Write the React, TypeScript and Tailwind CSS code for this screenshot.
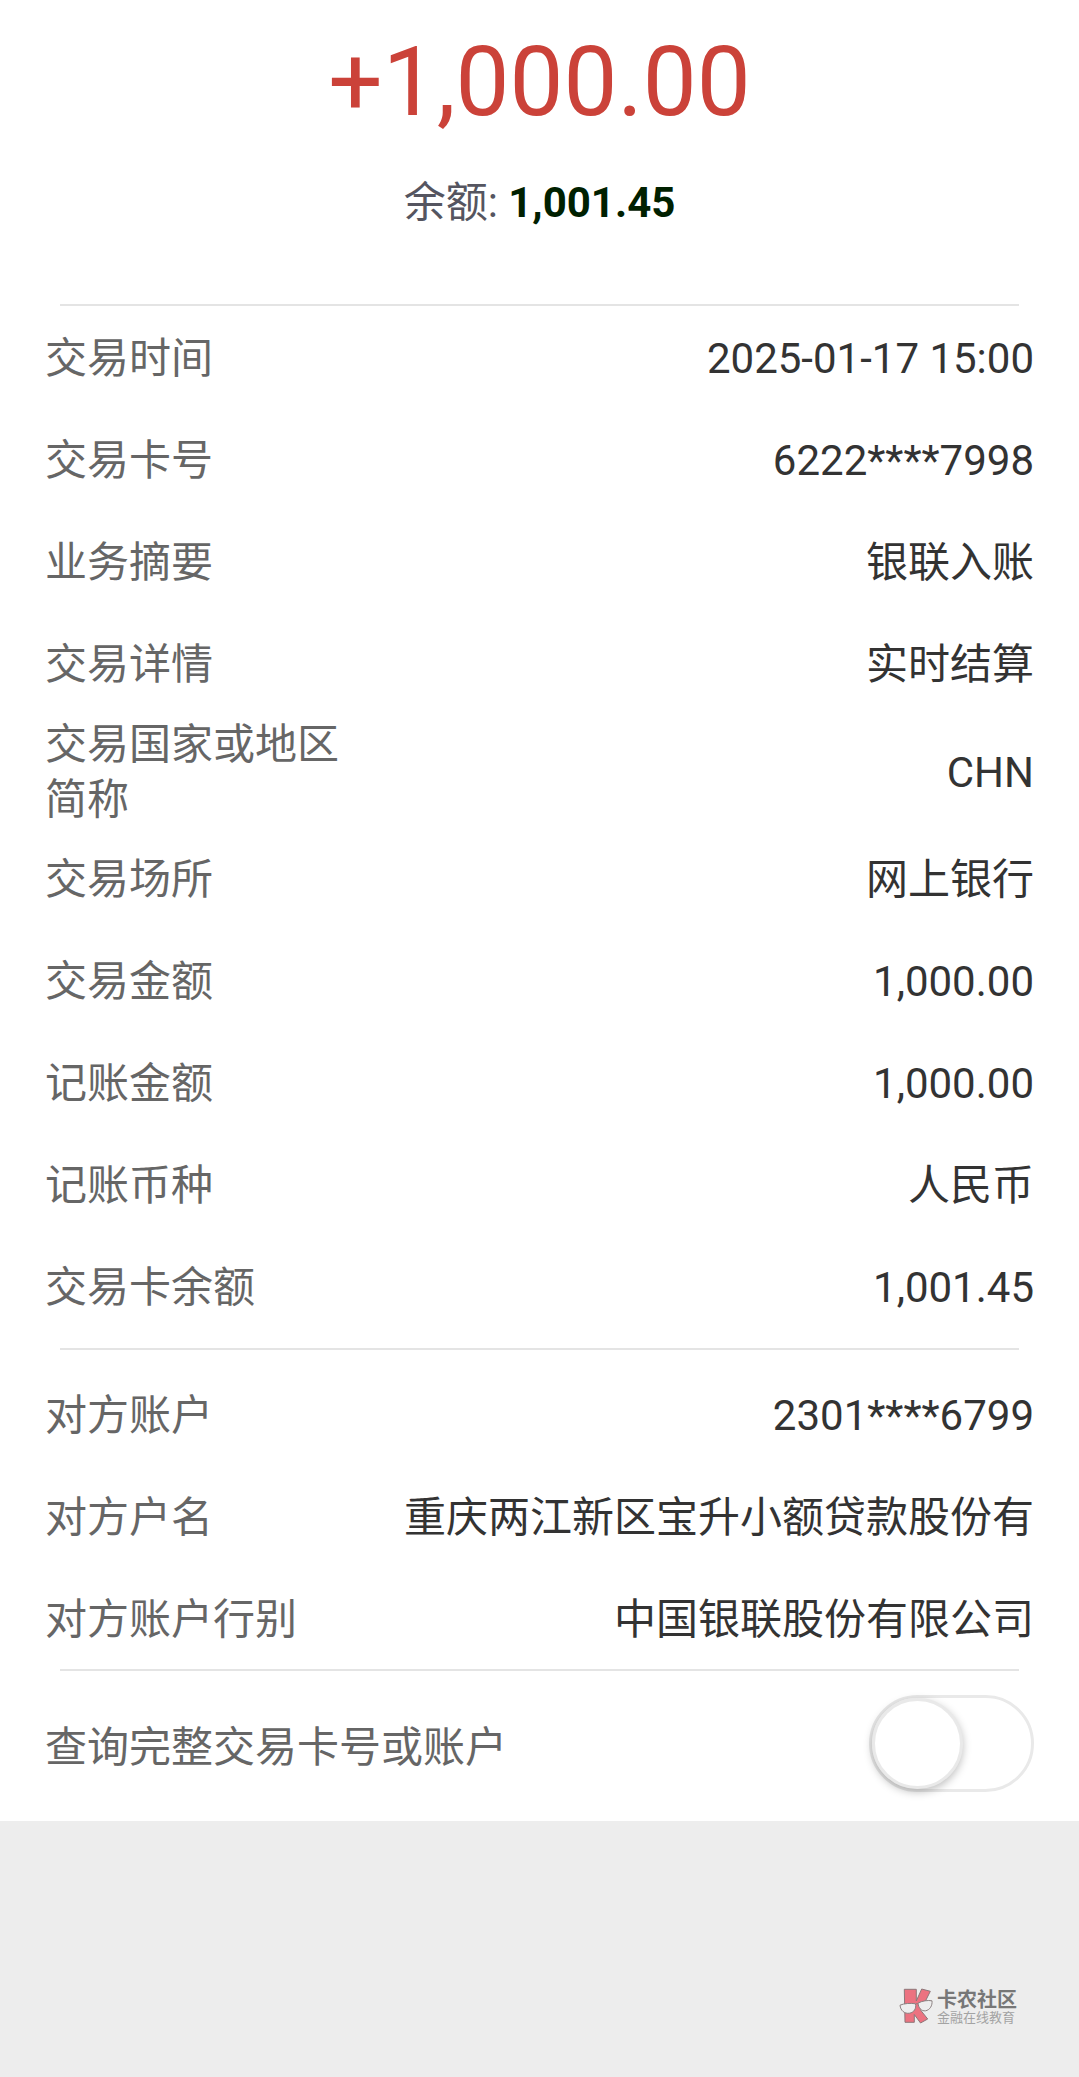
import { useState } from 'react';

interface Field {
  label: string;
  value: string;
}

const transactionFields: Field[] = [
  { label: '交易时间', value: '2025-01-17 15:00' },
  { label: '交易卡号', value: '6222****7998' },
  { label: '业务摘要', value: '银联入账' },
  { label: '交易详情', value: '实时结算' },
  { label: '交易国家或地区简称', value: 'CHN' },
  { label: '交易场所', value: '网上银行' },
  { label: '交易金额', value: '1,000.00' },
  { label: '记账金额', value: '1,000.00' },
  { label: '记账币种', value: '人民币' },
  { label: '交易卡余额', value: '1,001.45' },
];

const counterpartyFields: Field[] = [
  { label: '对方账户', value: '2301****6799' },
  { label: '对方户名', value: '重庆两江新区宝升小额贷款股份有' },
  { label: '对方账户行别', value: '中国银联股份有限公司' },
];

function Divider() {
  return <hr className="mx-[60px] border-t-2 border-[#e4e4e4]" />;
}

function FieldList({ fields }: { fields: Field[] }) {
  return (
    <dl className="px-[45px]">
      {fields.map((field) => (
        <div key={field.label} className="flex min-h-[102px] items-center justify-between pt-[3px]">
          <dt className="max-w-[300px] text-[#666666]">{field.label}</dt>
          <dd className="text-right text-[#333333]">{field.value}</dd>
        </div>
      ))}
    </dl>
  );
}

function BrandMark() {
  return (
    <svg viewBox="0 0 34 36" className="h-9 w-[34px]" aria-hidden="true">
      {/* K */}
      <path
        d="M5.300 1.300H17.300V13L22.700 1L31.300 3.300L24 18L21.500 22L28.700 31L21.500 35L15.300 26.500V34.300H6L5.300 1.300Z"
        fill="#ec7280"
        stroke="#8d7779"
        strokeWidth="1"
        strokeLinejoin="round"
      />
      {/* glasses */}
      <g fill="#eeeeee" stroke="#8b8080" strokeWidth="1">
        <path d="M1 17.200C5 15.300 12 15 16.500 15.800C17.500 20.500 15 24.500 10.500 25.200C5.500 26 1.500 22.500 1 17.200Z" />
        <path d="M19 15.200C23 12.800 29 12 33 12.800C33.500 17.500 31 22 26.500 22.800C22.500 23.300 19.500 20 19 15.200Z" />
        <path d="M16.500 16.500C17 15.500 18.500 15.200 19.200 16" fill="none" />
      </g>
    </svg>
  );
}

export default function App() {
  const [showFull, setShowFull] = useState(false);

  return (
    <div className="flex min-h-screen flex-col bg-[#ededed] font-['Roboto','Noto_Sans_CJK_SC',sans-serif] text-[42px] leading-[55px]">
      <main className="bg-white">
        <header className="pt-[26px] pb-[74px] text-center">
          <h1 className="text-[96px] leading-[112px] text-[#cb4239]">+1,000.00</h1>
          <p className="mt-[37px] text-[#555560]">
            余额: <strong className="font-bold text-[#002000]">1,001.45</strong>
          </p>
        </header>

        <Divider />
        <FieldList fields={transactionFields} />

        <div className="pt-[11px] pb-[13px]">
          <Divider />
        </div>
        <FieldList fields={counterpartyFields} />

        <Divider />
        <div className="flex items-center justify-between px-[45px] pt-6 pb-[29px]">
          <label htmlFor="show-full" className="pt-2 text-[#666666]">
            查询完整交易卡号或账户
          </label>
          <input
            id="show-full"
            type="checkbox"
            role="switch"
            checked={showFull}
            onChange={(e) => setShowFull(e.target.checked)}
            className="h-[97px] w-[165px] cursor-pointer appearance-none rounded-full border-3 border-[#e9e9e9] bg-white before:block before:h-[91px] before:w-[91px] before:rounded-full before:border-3 before:border-[#e9e9e9] before:bg-white before:shadow-[0_3px_8px_rgba(0,0,0,0.25)] checked:bg-[#cb4239] checked:before:ml-auto"
          />
        </div>
      </main>

      <footer className="mt-auto flex items-center justify-end gap-1 px-[62px] pb-[51px]">
        <BrandMark />
        <div className="pt-1">
          <p className="text-[20px] leading-5 font-bold text-[#777777]">卡农社区</p>
          <p className="text-[13px] leading-4 text-[#a3a3a3]">金融在线教育</p>
        </div>
      </footer>
    </div>
  );
}
